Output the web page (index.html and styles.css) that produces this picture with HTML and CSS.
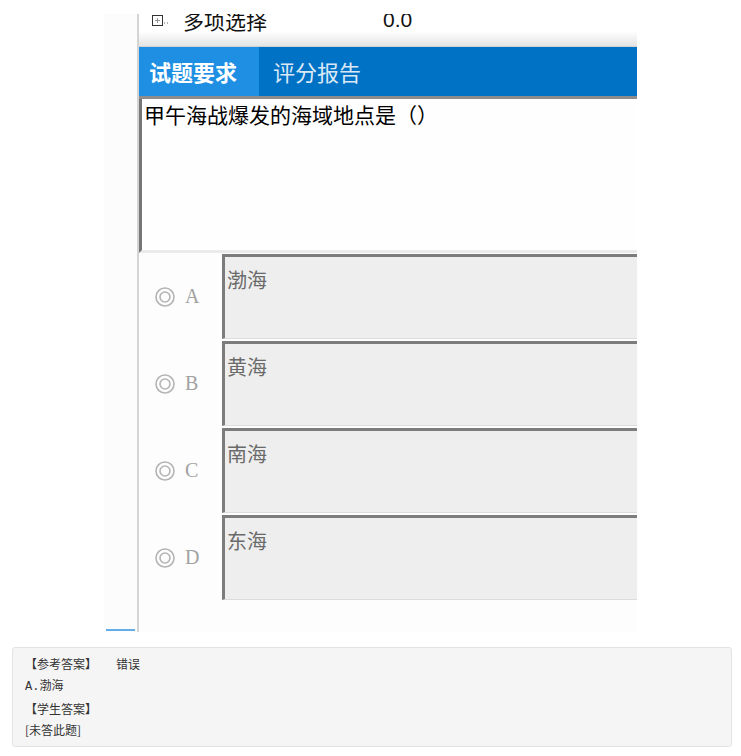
FILE: index.html
```html
<!DOCTYPE html>
<html lang="zh-CN">
<head>
	<meta charset="UTF-8">
	<meta name="viewport" content="width=device-width, initial-scale=1.0">
	<title>试题要求</title>
	<link rel="stylesheet" href="styles.css">
</head>
<body>
	<div class="shot">
		<div class="side">
			<div class="side-mark"></div>
		</div>
		<div class="pane">
			<div class="tree-row">
				<svg class="tree-icon" width="22" height="12" viewBox="0 0 22 12">
					<rect x="0.5" y="0.5" width="10" height="10" fill="#fff" stroke="#333"/>
					<path d="M3 5.5h5M5.5 3v5" stroke="#999"/>
					<path d="M12 8h1M15 8h1" stroke="#666"/>
				</svg>
				<span class="tree-name">多项选择</span>
				<span class="tree-score">0.0</span>
			</div>
			<div class="tabs">
				<div class="tab active">试题要求</div>
				<div class="tab">评分报告</div>
			</div>
			<div class="question">甲午海战爆发的海域地点是（）</div>
			<div class="options">
				<div class="opt-row">
					<div class="opt-label">
						<svg width="20" height="20" viewBox="0 0 20 20"><circle cx="10" cy="10" r="9" fill="none" stroke="#b4b4b4" stroke-width="1.6"/><circle cx="10" cy="10" r="5" fill="none" stroke="#b4b4b4" stroke-width="1.6"/></svg>
						<span>A</span>
					</div>
					<div class="opt-box">渤海</div>
				</div>
				<div class="opt-row">
					<div class="opt-label">
						<svg width="20" height="20" viewBox="0 0 20 20"><circle cx="10" cy="10" r="9" fill="none" stroke="#b4b4b4" stroke-width="1.6"/><circle cx="10" cy="10" r="5" fill="none" stroke="#b4b4b4" stroke-width="1.6"/></svg>
						<span>B</span>
					</div>
					<div class="opt-box">黄海</div>
				</div>
				<div class="opt-row">
					<div class="opt-label">
						<svg width="20" height="20" viewBox="0 0 20 20"><circle cx="10" cy="10" r="9" fill="none" stroke="#b4b4b4" stroke-width="1.6"/><circle cx="10" cy="10" r="5" fill="none" stroke="#b4b4b4" stroke-width="1.6"/></svg>
						<span>C</span>
					</div>
					<div class="opt-box">南海</div>
				</div>
				<div class="opt-row">
					<div class="opt-label">
						<svg width="20" height="20" viewBox="0 0 20 20"><circle cx="10" cy="10" r="9" fill="none" stroke="#b4b4b4" stroke-width="1.6"/><circle cx="10" cy="10" r="5" fill="none" stroke="#b4b4b4" stroke-width="1.6"/></svg>
						<span>D</span>
					</div>
					<div class="opt-box">东海</div>
				</div>
			</div>
		</div>
	</div>
	<div class="answer">
		<div>【参考答案】<span class="result">错误</span></div>
		<div><span class="mono">A.</span>渤海</div>
		<div>【学生答案】</div>
		<div>[未答此题]</div>
	</div>
</body>
</html>
```
FILE: styles.css
```css
*{
	margin: 0;
	padding: 0;
	box-sizing: border-box;
}
body{
	background: #fff;
	font-family: "Noto Sans CJK SC", "Noto Sans", sans-serif;
	color: #222;
}
.shot{
	display: flex;
	width: 533px;
	height: 618px;
	margin: 14px 0 0 104px;
}
.side{
	width: 35px;
	background: #fcfcfc;
	border-right: 2px solid #d4d4d4;
	display: flex;
	flex-direction: column;
	justify-content: flex-end;
}
.side-mark{
	height: 2px;
	margin: 0 0 1px 2px;
	width: 29px;
	background: #63aee8;
}
.pane{
	flex: 1;
	display: flex;
	flex-direction: column;
}
.tree-row{
	height: 33px;
	overflow: hidden;
	display: flex;
	align-items: flex-start;
	background: linear-gradient(#fff 55%, #e4e4e4);
	border-bottom: 1px solid #d2d2d2;
	padding-left: 13px;
}
.tree-icon{
	margin-top: 1px;
	margin-right: 9px;
}
.tree-name,.tree-score{
	font-size: 21px;
	line-height: 24px;
	margin-top: -6px;
	color: #111;
}
.tree-score{
	margin-left: 116px;
	font-family: "Liberation Sans", sans-serif;
}
.tabs{
	height: 52px;
	display: flex;
	background: #0072c6;
	border-bottom: 3px solid #8c8c8c;
}
.tab{
	font-size: 22px;
	line-height: 49px;
	color: #dbe9f6;
	padding-left: 14px;
}
.tab.active{
	width: 120px;
	padding-left: 10px;
	background: #1e8fe2;
	color: #fff;
	font-weight: bold;
}
.question{
	height: 154px;
	background: #fefefe;
	border-left: 3px solid #767676;
	border-bottom: 3px solid #ebebeb;
	padding: 2px 2px;
	font-size: 21px;
	line-height: 26px;
	color: #000;
}
.options{
	flex: 1;
	padding-top: 1px;
	background: #fdfdfd;
}
.opt-row{
	display: flex;
	height: 85px;
	margin-bottom: 2px;
}
.opt-label{
	width: 83px;
	display: flex;
	align-items: center;
	padding-left: 16px;
	gap: 10px;
	font-family: "Liberation Serif", serif;
	font-size: 20px;
	color: #a2a2a2;
}
.opt-box{
	flex: 1;
	background: #eeeeee;
	border-top: 3px solid #7c7c7c;
	border-left: 3px solid #7c7c7c;
	border-bottom: 1px solid #dcdcdc;
	padding: 11px 2px 0;
	font-size: 20px;
	line-height: 24px;
	color: #6a6a6a;
}
.answer{
	width: 720px;
	margin: 15px 0 0 12px;
	padding: 5px 12px 6px;
	background: #f5f5f5;
	border: 1px solid #e3e3e3;
	border-radius: 3px;
	font-size: 12px;
	line-height: 21px;
	color: #333;
}
.mono{
	font-family: "Liberation Mono", monospace;
}
.result{
	margin-left: 19px;
}
```
